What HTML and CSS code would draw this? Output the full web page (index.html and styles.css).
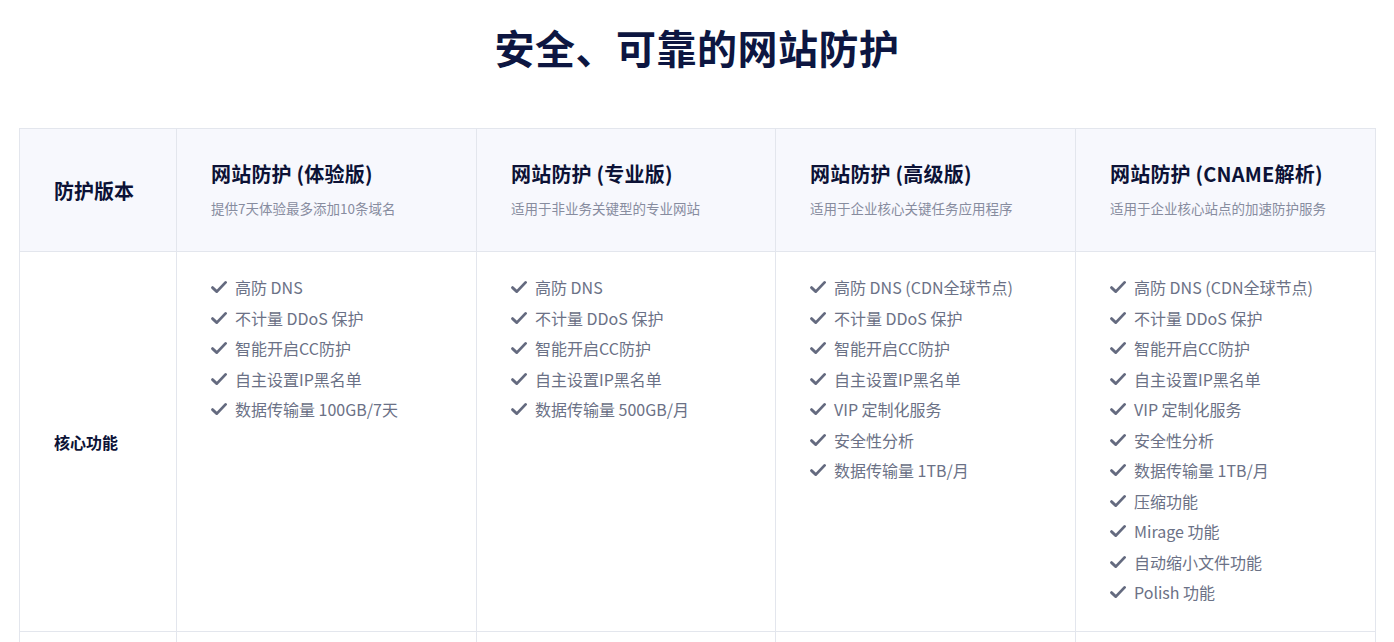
FILE: index.html
```html
<!DOCTYPE html>
<html lang="zh-CN">
<head>
<meta charset="utf-8">
<title>安全、可靠的网站防护</title>
<link rel="stylesheet" href="styles.css">
</head>
<body>
<section class="page">
  <h1 class="title">安全、可靠的网站防护</h1>
  <table class="plans">
    <colgroup>
      <col class="c-label">
      <col class="c-plan">
      <col class="c-plan2">
      <col class="c-plan">
      <col class="c-plan">
    </colgroup>
    <thead>
      <tr class="head-row">
        <th class="label head-label">防护版本</th>
        <th class="plan-head"><div class="plan-name">网站防护 (体验版)</div><div class="plan-desc">提供7天体验最多添加10条域名</div></th>
        <th class="plan-head"><div class="plan-name">网站防护 (专业版)</div><div class="plan-desc">适用于非业务关键型的专业网站</div></th>
        <th class="plan-head"><div class="plan-name">网站防护 (高级版)</div><div class="plan-desc">适用于企业核心关键任务应用程序</div></th>
        <th class="plan-head"><div class="plan-name">网站防护 (CNAME解析)</div><div class="plan-desc">适用于企业核心站点的加速防护服务</div></th>
      </tr>
    </thead>
    <tbody>
      <tr class="feat-row">
        <td class="label">核心功能</td>
        <td class="feat">
          <ul class="list">
            <li><svg class="chk" viewBox="0 0 16 16"><path d="M1.5 8.6 L5.8 12.6 L14.6 3.4"/></svg>高防 DNS</li>
            <li><svg class="chk" viewBox="0 0 16 16"><path d="M1.5 8.6 L5.8 12.6 L14.6 3.4"/></svg>不计量 DDoS 保护</li>
            <li><svg class="chk" viewBox="0 0 16 16"><path d="M1.5 8.6 L5.8 12.6 L14.6 3.4"/></svg>智能开启CC防护</li>
            <li><svg class="chk" viewBox="0 0 16 16"><path d="M1.5 8.6 L5.8 12.6 L14.6 3.4"/></svg>自主设置IP黑名单</li>
            <li><svg class="chk" viewBox="0 0 16 16"><path d="M1.5 8.6 L5.8 12.6 L14.6 3.4"/></svg>数据传输量 100GB/7天</li>
          </ul>
        </td>
        <td class="feat">
          <ul class="list">
            <li><svg class="chk" viewBox="0 0 16 16"><path d="M1.5 8.6 L5.8 12.6 L14.6 3.4"/></svg>高防 DNS</li>
            <li><svg class="chk" viewBox="0 0 16 16"><path d="M1.5 8.6 L5.8 12.6 L14.6 3.4"/></svg>不计量 DDoS 保护</li>
            <li><svg class="chk" viewBox="0 0 16 16"><path d="M1.5 8.6 L5.8 12.6 L14.6 3.4"/></svg>智能开启CC防护</li>
            <li><svg class="chk" viewBox="0 0 16 16"><path d="M1.5 8.6 L5.8 12.6 L14.6 3.4"/></svg>自主设置IP黑名单</li>
            <li><svg class="chk" viewBox="0 0 16 16"><path d="M1.5 8.6 L5.8 12.6 L14.6 3.4"/></svg>数据传输量 500GB/月</li>
          </ul>
        </td>
        <td class="feat">
          <ul class="list">
            <li><svg class="chk" viewBox="0 0 16 16"><path d="M1.5 8.6 L5.8 12.6 L14.6 3.4"/></svg>高防 DNS (CDN全球节点)</li>
            <li><svg class="chk" viewBox="0 0 16 16"><path d="M1.5 8.6 L5.8 12.6 L14.6 3.4"/></svg>不计量 DDoS 保护</li>
            <li><svg class="chk" viewBox="0 0 16 16"><path d="M1.5 8.6 L5.8 12.6 L14.6 3.4"/></svg>智能开启CC防护</li>
            <li><svg class="chk" viewBox="0 0 16 16"><path d="M1.5 8.6 L5.8 12.6 L14.6 3.4"/></svg>自主设置IP黑名单</li>
            <li><svg class="chk" viewBox="0 0 16 16"><path d="M1.5 8.6 L5.8 12.6 L14.6 3.4"/></svg>VIP 定制化服务</li>
            <li><svg class="chk" viewBox="0 0 16 16"><path d="M1.5 8.6 L5.8 12.6 L14.6 3.4"/></svg>安全性分析</li>
            <li><svg class="chk" viewBox="0 0 16 16"><path d="M1.5 8.6 L5.8 12.6 L14.6 3.4"/></svg>数据传输量 1TB/月</li>
          </ul>
        </td>
        <td class="feat">
          <ul class="list">
            <li><svg class="chk" viewBox="0 0 16 16"><path d="M1.5 8.6 L5.8 12.6 L14.6 3.4"/></svg>高防 DNS (CDN全球节点)</li>
            <li><svg class="chk" viewBox="0 0 16 16"><path d="M1.5 8.6 L5.8 12.6 L14.6 3.4"/></svg>不计量 DDoS 保护</li>
            <li><svg class="chk" viewBox="0 0 16 16"><path d="M1.5 8.6 L5.8 12.6 L14.6 3.4"/></svg>智能开启CC防护</li>
            <li><svg class="chk" viewBox="0 0 16 16"><path d="M1.5 8.6 L5.8 12.6 L14.6 3.4"/></svg>自主设置IP黑名单</li>
            <li><svg class="chk" viewBox="0 0 16 16"><path d="M1.5 8.6 L5.8 12.6 L14.6 3.4"/></svg>VIP 定制化服务</li>
            <li><svg class="chk" viewBox="0 0 16 16"><path d="M1.5 8.6 L5.8 12.6 L14.6 3.4"/></svg>安全性分析</li>
            <li><svg class="chk" viewBox="0 0 16 16"><path d="M1.5 8.6 L5.8 12.6 L14.6 3.4"/></svg>数据传输量 1TB/月</li>
            <li><svg class="chk" viewBox="0 0 16 16"><path d="M1.5 8.6 L5.8 12.6 L14.6 3.4"/></svg>压缩功能</li>
            <li><svg class="chk" viewBox="0 0 16 16"><path d="M1.5 8.6 L5.8 12.6 L14.6 3.4"/></svg>Mirage 功能</li>
            <li><svg class="chk" viewBox="0 0 16 16"><path d="M1.5 8.6 L5.8 12.6 L14.6 3.4"/></svg>自动缩小文件功能</li>
            <li><svg class="chk" viewBox="0 0 16 16"><path d="M1.5 8.6 L5.8 12.6 L14.6 3.4"/></svg>Polish 功能</li>
          </ul>
        </td>
      </tr>
      <tr class="next-row">
        <td class="label"></td>
        <td class="feat"></td>
        <td class="feat"></td>
        <td class="feat"></td>
        <td class="feat"></td>
      </tr>
    </tbody>
  </table>
</section>
</body>
</html>
```

FILE: styles.css
```css
* { box-sizing: border-box; }
html, body { margin: 0; padding: 0; background: #ffffff; }
body {
  font-family: "Noto Sans CJK SC", "Noto Sans", sans-serif;
  color: #0c1437;
}
.page {
  padding: 19px 19px 0 19px;
}
.title {
  margin: 0 0 53px 0;
  text-align: center;
  font-size: 40px;
  line-height: 56px;
  font-weight: 700;
  color: #0d1641;
  letter-spacing: 0.5px;
}
.plans {
  width: 1356px;
  border-collapse: collapse;
  table-layout: fixed;
}
.c-label { width: 157px; }
.c-plan { width: 300px; }
.c-plan2 { width: 299px; }
.plans th, .plans td {
  border: 1px solid #e3e6ed;
  text-align: left;
  vertical-align: middle;
  padding: 0 20px 0 34px;
}
.head-row th {
  background: #f7f8fd;
  height: 123px;
}
.head-row th.plan-head {
  padding-bottom: 3px;
}
.label {
  font-size: 16px;
  font-weight: 700;
  color: #0c1236;
}
.head-label {
  font-size: 20px;
}
.plan-name {
  font-size: 20px;
  font-weight: 700;
  line-height: 28px;
  color: #0c1236;
  white-space: nowrap;
  letter-spacing: 0.2px;
}
.plan-desc {
  margin-top: 11px;
  font-size: 13.5px;
  font-weight: 400;
  line-height: 18px;
  color: #878c9f;
  white-space: nowrap;
}
.feat-row td {
  height: 380px;
}
.feat {
  vertical-align: top !important;
  padding-top: 20px !important;
  padding-bottom: 20px !important;
}
.list {
  list-style: none;
  margin: 0;
  padding: 0;
}
.list li {
  display: flex;
  align-items: center;
  gap: 8px;
  font-size: 16px;
  line-height: 30.5px;
  color: #6b7186;
  white-space: nowrap;
}
.chk {
  width: 16px;
  height: 16px;
  flex: none;
}
.chk path {
  fill: none;
  stroke: #646a7f;
  stroke-width: 2.8;
  stroke-linecap: round;
  stroke-linejoin: round;
}
.next-row td {
  height: 80px;
}
```
